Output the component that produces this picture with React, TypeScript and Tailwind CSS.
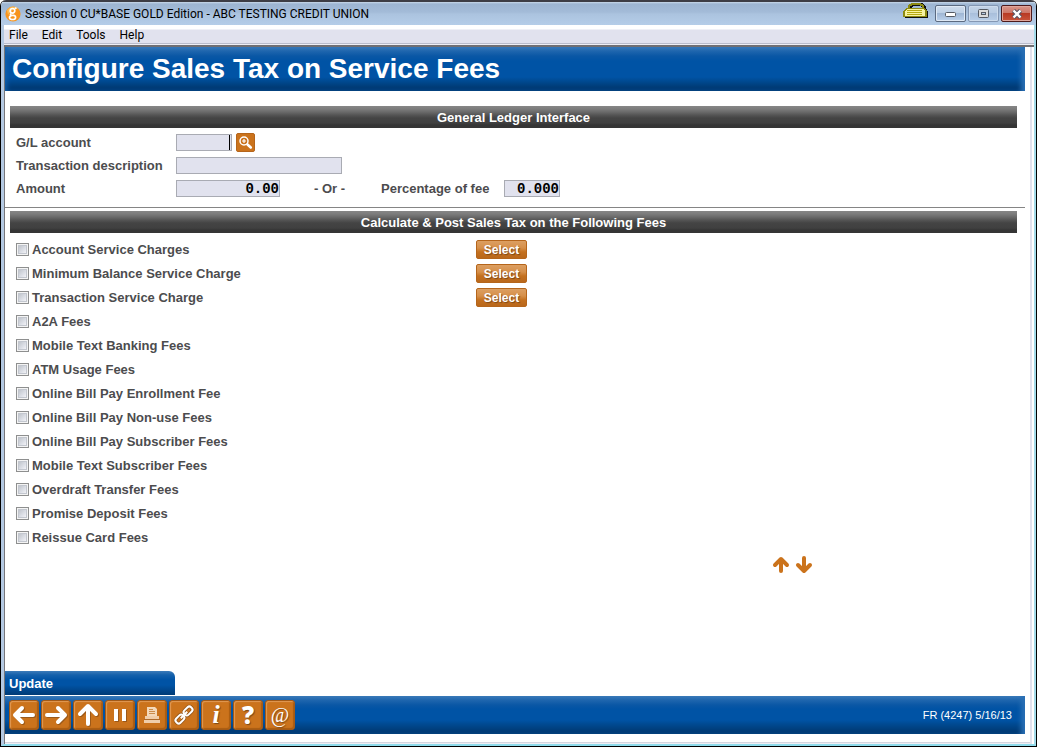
import { useState } from "react";
import type { ReactNode } from "react";

const fees = [
  { name: "Account Service Charges", select: true },
  { name: "Minimum Balance Service Charge", select: true },
  { name: "Transaction Service Charge", select: true },
  { name: "A2A Fees" },
  { name: "Mobile Text Banking Fees" },
  { name: "ATM Usage Fees" },
  { name: "Online Bill Pay Enrollment Fee" },
  { name: "Online Bill Pay Non-use Fees" },
  { name: "Online Bill Pay Subscriber Fees" },
  { name: "Mobile Text Subscriber Fees" },
  { name: "Overdraft Transfer Fees" },
  { name: "Promise Deposit Fees" },
  { name: "Reissue Card Fees" },
];

const inputClass =
  "h-[17px] shrink-0 border border-[#a9abb3] bg-[#e1e2ee] font-['Liberation_Mono',monospace] text-[14px] font-bold leading-[15px] text-black outline-none";

function SectionBar({ children }: { children: ReactNode }) {
  return (
    <h2 className="h-[22px] bg-[linear-gradient(#868686_0px,#7c7c7c_3px,#6a6a6a_6px,#555_9px,#444_12px,#404040_17px,#353535_19px)] text-center text-[13px] font-bold leading-[24px] text-white">
      {children}
    </h2>
  );
}

function ToolButton({ label, children }: { label: string; children: ReactNode }) {
  return (
    <button
      aria-label={label}
      className="flex size-[30px] items-center justify-center rounded-[3px] border border-[#a35a17] bg-[#cb731c] text-white shadow-[inset_1px_1px_1px_#e09a55,inset_-1px_-1px_1px_#a95c12]"
    >
      {children}
    </button>
  );
}

function Arrow({ d }: { d: string }) {
  return (
    <svg width="24" height="24" viewBox="0 0 24 24" fill="none" strokeLinecap="round" strokeLinejoin="round">
      <path d={d} stroke="#7c4817" strokeWidth="4" transform="translate(1 1)" strokeOpacity="0.6" />
      <path d={d} stroke="#fff" strokeWidth="4" />
    </svg>
  );
}

function TitleBar() {
  return (
    <header className="flex h-[25px] items-center border-t-2 border-[#3d3d45] bg-[linear-gradient(#c9d9ea_0px,#9db5d2_2px,#a3bbd8_10px,#abc3df_12px,#b5cde8_23px)] px-[4px]">
      <svg width="16" height="16" viewBox="0 0 16 16" className="shrink-0">
        <circle cx="8" cy="8" r="7.6" fill="#f7941e" />
        <path d="M2 4a7.6 7.6 0 0 1 11-1.500C9 3 5 5 3 9z" fill="#fdb94e" />
        <g fill="none" stroke="#fff" strokeWidth="1.700">
          <circle cx="7.500" cy="4.800" r="2.300" />
          <path d="M10 2.500l1.500-.7M6 7.500c-1.500 1.800.5 1.800 2.500 1.900 3 .2 2.800 4.100-.8 4.100-4 0-4-3.200-1.200-3.900" />
        </g>
      </svg>
      <h1 className="ml-1 flex-1 whitespace-nowrap font-[Roboto,sans-serif] text-[12px] leading-[18px] text-black">
        Session 0 CU*BASE GOLD Edition - ABC TESTING CREDIT UNION
      </h1>
      <svg width="26" height="16" viewBox="0 0 26 16" className="mr-[6px] shrink-0 self-start" shapeRendering="crispEdges">
        <path d="M7 8V5l3-3h8l3 3v3" fill="none" stroke="#111" strokeWidth="3" />
        <path d="M6 7V4l3-2h8l3 2v3" fill="none" stroke="#8c8a12" strokeWidth="2" />
        <path d="M4 7h20l1 3v6H2z" fill="#111" />
        <path d="M3 6h18l3 3v6H0V9z" fill="#8c8a12" />
        <path d="M4 7h17l1 2v5H2V9z" fill="#f7f3a0" />
        <path d="M4 8.500h15M4 10.500h15M4 12.500h15" stroke="#b5a90f" strokeWidth="1" />
      </svg>
      <div className="flex gap-[2px]">
        <button aria-label="Minimize" className="flex h-[17px] w-[31px] items-center justify-center rounded-[2px] border border-[#5b6a80] bg-[linear-gradient(#cfdcec_0%,#bccfe5_48%,#a0b7d4_50%,#bcd2ec_100%)] shadow-[inset_0_0_0_1px_#dfe9f5]">
          <svg width="12" height="6" viewBox="0 0 12 6"><rect x="0.500" y="1.500" width="10" height="4" rx="1" fill="#fff" stroke="#555a63" /></svg>
        </button>
        <button aria-label="Maximize" className="flex h-[17px] w-[31px] items-center justify-center rounded-[2px] border border-[#8497b3] bg-[linear-gradient(#c3d3e7_0%,#b7cbe3_48%,#a9bfdb_50%,#b9cfe9_100%)] shadow-[inset_0_0_0_1px_#cddbec]">
          <svg width="12" height="10" viewBox="0 0 12 10" fill="#dcdcdc" stroke="#555a63"><rect x="0.500" y="0.500" width="10" height="8" rx="1" /><rect x="3.500" y="3.500" width="4" height="2" fill="#b7cbe3" /></svg>
        </button>
        <button aria-label="Close" className="flex h-[17px] w-[31px] items-center justify-center rounded-[2px] border border-[#4d1a1c] bg-[linear-gradient(#d8968b_0%,#cc7465_48%,#b83a24_50%,#c9553c_100%)] shadow-[inset_0_0_0_1px_#e0a69c]">
          <svg width="12" height="10" viewBox="0 0 12 10">
            <path d="M2.500 1.500l7 7M9.500 1.500l-7 7" stroke="#535666" strokeWidth="4.400" />
            <path d="M2.500 1.500l7 7M9.500 1.500l-7 7" stroke="#fff" strokeWidth="2.400" />
          </svg>
        </button>
      </div>
    </header>
  );
}

export default function App() {
  const [checked, setChecked] = useState<string[]>([]);

  function toggle(name: string) {
    setChecked(checked.includes(name) ? checked.filter((n) => n !== name) : [...checked, name]);
  }

  return (
    <div className="flex min-h-screen flex-col overflow-hidden rounded-t-[6px] border-b border-l border-r border-black bg-white font-['Liberation_Sans',Arial,sans-serif] text-[#4c4c4e]">
      <TitleBar />

      <div className="flex flex-1 flex-col border-b-2 border-l-3 border-r-2 border-b-[#8fdcec] border-l-[#b4c9e2] border-r-[#a5dcea]">
        <nav className="flex h-[18px] items-center gap-[14px] bg-[linear-gradient(#fff_0px,#fff_4px,#e1e2ee_5px)] pl-[5px] pt-[2px] font-[Roboto,sans-serif] text-[12px] leading-[16px] text-black">
          <button>File</button>
          <button>Edit</button>
          <button>Tools</button>
          <button>Help</button>
        </nav>
        <div className="h-[4px] border-b-2 border-t border-b-[#6f6f73] border-t-[#b9bccb] bg-[#eeeef4]" />

        <main className="mr-[2px] flex flex-1 flex-col border-l border-r-2 border-l-[#77777b] border-r-[#e1e2ee]">
          <div className="mr-[5px] h-[44px] bg-[linear-gradient(#3c7bb9_0px,#1f66ae_4px,#0a57a5_9px,#0053a5_14px,#0053a5_30px,#004a92_34px,#003b76_40px)] pl-[7px] shadow-[inset_-7px_0_5px_-3px_#2a6fb4,inset_5px_0_5px_-3px_#1460ab]">
            <h1 className="text-[28px] font-bold leading-[44px] text-white">Configure Sales Tax on Service Fees</h1>
          </div>

          <div className="ml-[5px] mr-[13px] mt-[15px]">
            <SectionBar>General Ledger Interface</SectionBar>
            <div className="pl-[6px] pt-[3px] text-[13px] font-bold">
              <div className="flex h-[23px] items-center">
                <label htmlFor="gl" className="w-[160px]">G/L account</label>
                <input id="gl" type="text" className={`${inputClass} w-[56px]`} />
                <span className="-ml-[3px] h-[15px] w-px bg-black" />
                <button aria-label="Look up account" className="ml-[6px] flex size-[19px] items-center justify-center rounded-[2px] border border-[#b5651b] bg-[#cb731c]">
                  <svg width="15" height="15" viewBox="0 0 15 15" fill="none" stroke="#fff">
                    <circle cx="6" cy="6" r="4" strokeWidth="1.500" />
                    <path d="M4 6h4M6 4v4" strokeWidth="1.200" />
                    <path d="M9.500 9.500l3.300 3" strokeWidth="2.600" strokeLinecap="round" />
                  </svg>
                </button>
              </div>
              <div className="flex h-[23px] items-center">
                <label htmlFor="desc" className="w-[160px]">Transaction description</label>
                <input id="desc" type="text" className={`${inputClass} w-[166px]`} />
              </div>
              <div className="flex h-[23px] items-center">
                <label htmlFor="amount" className="w-[160px]">Amount</label>
                <input id="amount" type="text" defaultValue="0.00" className={`${inputClass} w-[104px] text-right`} />
                <span className="ml-[34px] w-[67px]">- Or -</span>
                <label htmlFor="percent" className="w-[123px]">Percentage of fee</label>
                <input id="percent" type="text" defaultValue="0.000" className={`${inputClass} w-[56px] text-right`} />
              </div>
            </div>
          </div>

          <hr className="mr-[5px] mt-[7px] border-[#858585]" />

          <div className="ml-[5px] mr-[13px] mt-[3px]">
            <SectionBar>Calculate &amp; Post Sales Tax on the Following Fees</SectionBar>
            <ul className="pl-[6px] pt-[4px] text-[13px] font-bold">
              {fees.map((fee) => (
                <li key={fee.name} className="grid h-[24px] grid-cols-[460px_auto] items-center justify-start">
                  <label className="flex h-[24px] items-center gap-[3px] leading-[24px]">
                    <input
                      type="checkbox"
                      checked={checked.includes(fee.name)}
                      onChange={() => toggle(fee.name)}
                      className="size-[13px] shrink-0 appearance-none border border-[#8e8f8f] bg-[linear-gradient(135deg,#bfc3ca_15%,#dcdfe6_55%,#f4f4f8_85%)] shadow-[inset_0_0_0_1px_#f4f4f4,inset_0_0_0_2px_#c3c7cf] checked:bg-[#4c607a] checked:bg-none"
                    />
                    <span className="pt-px">{fee.name}</span>
                  </label>
                  {fee.select && (
                    <button className="h-[19px] w-[51px] rounded-[2px] border border-[#b5651b] bg-[linear-gradient(#dc9f62_0px,#d68f49_7px,#c4701f_11px,#b9671b_17px)] pt-px text-[12px] font-bold leading-[16px] text-white [text-shadow:1px_1px_1px_#7c4817]">
                      Select
                    </button>
                  )}
                </li>
              ))}
            </ul>
          </div>

          <div className="mr-[217px] mt-[7px] flex justify-end gap-[5px]">
            <button aria-label="Page up">
              <svg width="18" height="18" viewBox="0 0 18 18" fill="none" stroke="#cb731c" strokeWidth="4" strokeLinecap="round" strokeLinejoin="round">
                <path d="M9 15V4M3 9l6-6 6 6" />
              </svg>
            </button>
            <button aria-label="Page down">
              <svg width="18" height="18" viewBox="0 0 18 18" fill="none" stroke="#cb731c" strokeWidth="4" strokeLinecap="round" strokeLinejoin="round">
                <path d="M9 2v12M3 9l6 6 6-6" />
              </svg>
            </button>
          </div>

          <div className="mt-auto">
            <button className="block h-[24px] w-[170px] rounded-tr-[6px] bg-[linear-gradient(#3c7bb9_0px,#1460ab_4px,#0053a5_9px,#0053a5_14px,#003b76_24px)] pl-[4px] text-left text-[13px] font-bold leading-[25px] text-white">
              Update
            </button>
          </div>
          <footer className="mb-[8px] mr-[5px] mt-px flex h-[38px] items-center gap-[2px] bg-[linear-gradient(#3c7bb9_0px,#1f66ae_4px,#0a57a5_9px,#0053a5_13px,#0053a5_24px,#004a92_28px,#003b76_35px)] pl-[4px] pr-[13px] shadow-[inset_-7px_0_5px_-3px_#2a6fb4]">
            <ToolButton label="Back"><Arrow d="M21 12H4M10 5l-7 7 7 7" /></ToolButton>
            <ToolButton label="Forward"><Arrow d="M3 12h17M14 5l7 7-7 7" /></ToolButton>
            <ToolButton label="Up"><Arrow d="M12 21V4M4 11l8-8 8 8" /></ToolButton>
            <ToolButton label="Pause">
              <svg width="24" height="24" viewBox="0 0 24 24">
                <path d="M7 7h4v12H7zM15 7h4v12h-4z" fill="#7c4817" fillOpacity="0.6" />
                <path d="M6 6h4v12H6zM14 6h4v12h-4z" fill="#fff" />
              </svg>
            </ToolButton>
            <ToolButton label="Print">
              <svg width="24" height="24" viewBox="0 0 24 24">
                <path d="M7 4h8l2 2v8H7z" fill="#f4d9ba" />
                <path d="M9 6.500h4M9 8.500h6M9 10.500h6" stroke="#cb8d4c" />
                <path d="M5 13h14v3H5zM4 17h16v3H4z" fill="#f0ceaa" />
                <path d="M4 16.500h16" stroke="#ad6a2b" />
              </svg>
            </ToolButton>
            <ToolButton label="Link">
              <svg width="24" height="24" viewBox="0 0 24 24" fill="none">
                <g transform="rotate(-45 12 12)" stroke="#7c4817" strokeOpacity="0.7" strokeWidth="3.600">
                  <rect x="1.500" y="9" width="9.500" height="6" rx="2.500" />
                  <rect x="13" y="9" width="9.500" height="6" rx="2.500" />
                </g>
                <g transform="rotate(-45 12 12)" stroke="#fff" strokeWidth="2">
                  <rect x="1.500" y="9" width="9.500" height="6" rx="2.500" />
                  <rect x="13" y="9" width="9.500" height="6" rx="2.500" />
                  <path d="M7.500 12h9" />
                </g>
              </svg>
            </ToolButton>
            <ToolButton label="Info">
              <span className="font-['Liberation_Serif',serif] text-[26px] font-bold italic leading-[28px] [text-shadow:1px_1px_1px_#7c4817]">i</span>
            </ToolButton>
            <ToolButton label="Help">
              <span className="font-['Open_Sans',sans-serif] text-[24px] font-extrabold leading-[28px] [text-shadow:1px_1px_1px_#7c4817]">?</span>
            </ToolButton>
            <ToolButton label="Email">
              <span className="font-['Liberation_Serif',serif] text-[20px] leading-[28px] [text-shadow:1px_1px_1px_#7c4817]">@</span>
            </ToolButton>
            <span className="ml-auto text-[11px] leading-[16px] text-white">FR (4247) 5/16/13</span>
          </footer>
          <div className="h-[2px] border-t border-[#d5d6e0] bg-[#eeeef4]" />
        </main>
      </div>
    </div>
  );
}
